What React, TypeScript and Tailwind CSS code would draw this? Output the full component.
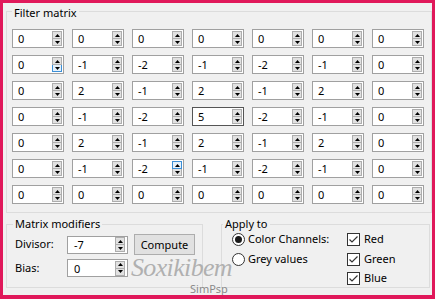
import React from "react";

const M = [
  [0, 0, 0, 0, 0, 0, 0],
  [0, -1, -2, -1, -2, -1, 0],
  [0, 2, -1, 2, -1, 2, 0],
  [0, -1, -2, 5, -2, -1, 0],
  [0, 2, -1, 2, -1, 2, 0],
  [0, -1, -2, -1, -2, -1, 0],
  [0, 0, 0, 0, 0, 0, 0],
];

function Up() {
  return (
    <svg width="5" height="3" viewBox="0 0 5 3">
      <polygon points="0,3 5,3 2.5,0" fill="#000" />
    </svg>
  );
}
function Down() {
  return (
    <svg width="5" height="3" viewBox="0 0 5 3">
      <polygon points="0,0 5,0 2.5,3" fill="#000" />
    </svg>
  );
}

function Spin({ hover }: { hover?: "up" | "down" }) {
  const upCls =
    hover === "up"
      ? "h-[8px] border border-[#3c8fd6] bg-[#e5f1fb] flex items-center justify-center"
      : "h-[8px] border border-[#adadad] bg-[#e1e1e1] flex items-center justify-center";
  const downCls =
    hover === "down"
      ? "h-[7px] border border-t-0 border-[#3c8fd6] bg-[#e5f1fb] flex items-center justify-center"
      : "h-[7px] border border-t-0 border-[#adadad] bg-[#e1e1e1] flex items-center justify-center";
  return (
    <div className="flex flex-col w-[10px] h-[15px] shrink-0">
      <div className={upCls}>
        <Up />
      </div>
      <div className={downCls}>
        <Down />
      </div>
    </div>
  );
}

function NumBox({
  v,
  hover,
  focus,
}: {
  v: number;
  hover?: "up" | "down";
  focus?: boolean;
}) {
  return (
    <div
      className={
        focus
          ? "h-[19px] w-[52px] border border-[#555555] bg-white flex items-center pr-[1px]"
          : "h-[19px] w-[52px] border border-[#a0a0a0] bg-white flex items-center pr-[1px]"
      }
    >
      <span className="flex-1 pl-[5px] leading-none text-[11px]">{v}</span>
      <Spin hover={hover} />
    </div>
  );
}

function WideBox({ v }: { v: string }) {
  return (
    <div className="h-[18px] w-[61px] border border-[#a0a0a0] bg-white flex items-center pr-[2px]">
      <span className="flex-1 pl-[6px] leading-none text-[11px]">{v}</span>
      <Spin />
    </div>
  );
}

function Radio({ checked }: { checked?: boolean }) {
  return (
    <div className="w-[13px] h-[13px] rounded-full border border-[#333333] bg-white flex items-center justify-center shrink-0">
      {checked ? <div className="w-[7px] h-[7px] rounded-full bg-[#1a1a1a]" /> : null}
    </div>
  );
}

function Check() {
  return (
    <div className="w-[13px] h-[13px] border border-[#333333] bg-white flex items-center justify-center shrink-0">
      <svg width="11" height="11" viewBox="0 0 11 11">
        <path d="M1.5 5.5 L4 8 L9.5 2.5" stroke="#333" strokeWidth="1.2" fill="none" />
      </svg>
    </div>
  );
}

export default function App() {
  const hoverMap: Record<string, "up" | "down"> = {
    "1-0": "down",
    "5-2": "up",
  };
  return (
    <div className="w-[435px] h-[299px] bg-[#f0f0f0] border-[#e0185a] border-t-[3px] border-l-[3px] border-r-[3px] border-b-[4px] font-['Noto_Sans',sans-serif] text-[11px] text-black relative overflow-hidden">
      <fieldset className="ml-[3px] w-[426px] h-[210px] border border-[#dcdcdc] p-0 m-0 min-w-0">
        <legend className="ml-[5px] px-[2px] pt-[4px] leading-[12px]">Filter matrix</legend>
        <div className="mt-[10px] ml-[5px] grid grid-cols-[repeat(7,52px)] auto-rows-[19px] gap-x-[8px] gap-y-[7px]">
          {M.map((row, r) =>
            row.map((v, c) => (
              <NumBox
                key={`${r}-${c}`}
                v={v}
                hover={hoverMap[`${r}-${c}`]}
                focus={r === 3 && c === 3}
              />
            ))
          )}
        </div>
      </fieldset>

      <div className="flex mt-[5px] ml-[3px] gap-[18px]">
        <fieldset className="w-[197px] h-[70px] border border-[#dcdcdc] p-0 m-0 min-w-0">
          <legend className="ml-[6px] px-[2px] leading-[12px]">Matrix modifiers</legend>
          <div className="pl-[8px] pt-[4px] flex flex-col gap-[4px]">
            <div className="flex items-center h-[21px]">
              <span className="w-[52px]">Divisor:</span>
              <WideBox v="-7" />
              <button className="ml-[6px] w-[61px] h-[21px] bg-[#e1e1e1] border border-[#adadad] flex items-center justify-center leading-none">
                Compute
              </button>
            </div>
            <div className="flex items-center h-[18px]">
              <span className="w-[52px]">Bias:</span>
              <WideBox v="0" />
            </div>
          </div>
        </fieldset>

        <fieldset className="w-[209px] h-[70px] border border-[#dcdcdc] p-0 m-0 min-w-0">
          <legend className="ml-[1px] px-[2px] leading-[12px]">Apply to</legend>
          <div className="-mt-[1px] pl-[10px] grid grid-cols-[115px_auto] grid-rows-[20px_20px_19px]">
            <div className="flex items-center gap-[3px]">
              <Radio checked />
              <span>Color Channels:</span>
            </div>
            <div className="flex items-center gap-[4px]">
              <Check />
              <span>Red</span>
            </div>
            <div className="flex items-center gap-[3px]">
              <Radio />
              <span>Grey values</span>
            </div>
            <div className="flex items-center gap-[4px]">
              <Check />
              <span>Green</span>
            </div>
            <div />
            <div className="flex items-center gap-[4px]">
              <Check />
              <span>Blue</span>
            </div>
          </div>
        </fieldset>
      </div>

      <div className="absolute left-[128px] top-[252px] text-[26px] leading-none italic font-['Liberation_Serif',serif] text-[#b0b0b0] tracking-tight pointer-events-none">
        Soxikibem
      </div>
      <div className="absolute left-[187px] top-[280px] text-[11px] leading-none text-[#8a8a8a] pointer-events-none">
        SimPsp
      </div>
    </div>
  );
}
